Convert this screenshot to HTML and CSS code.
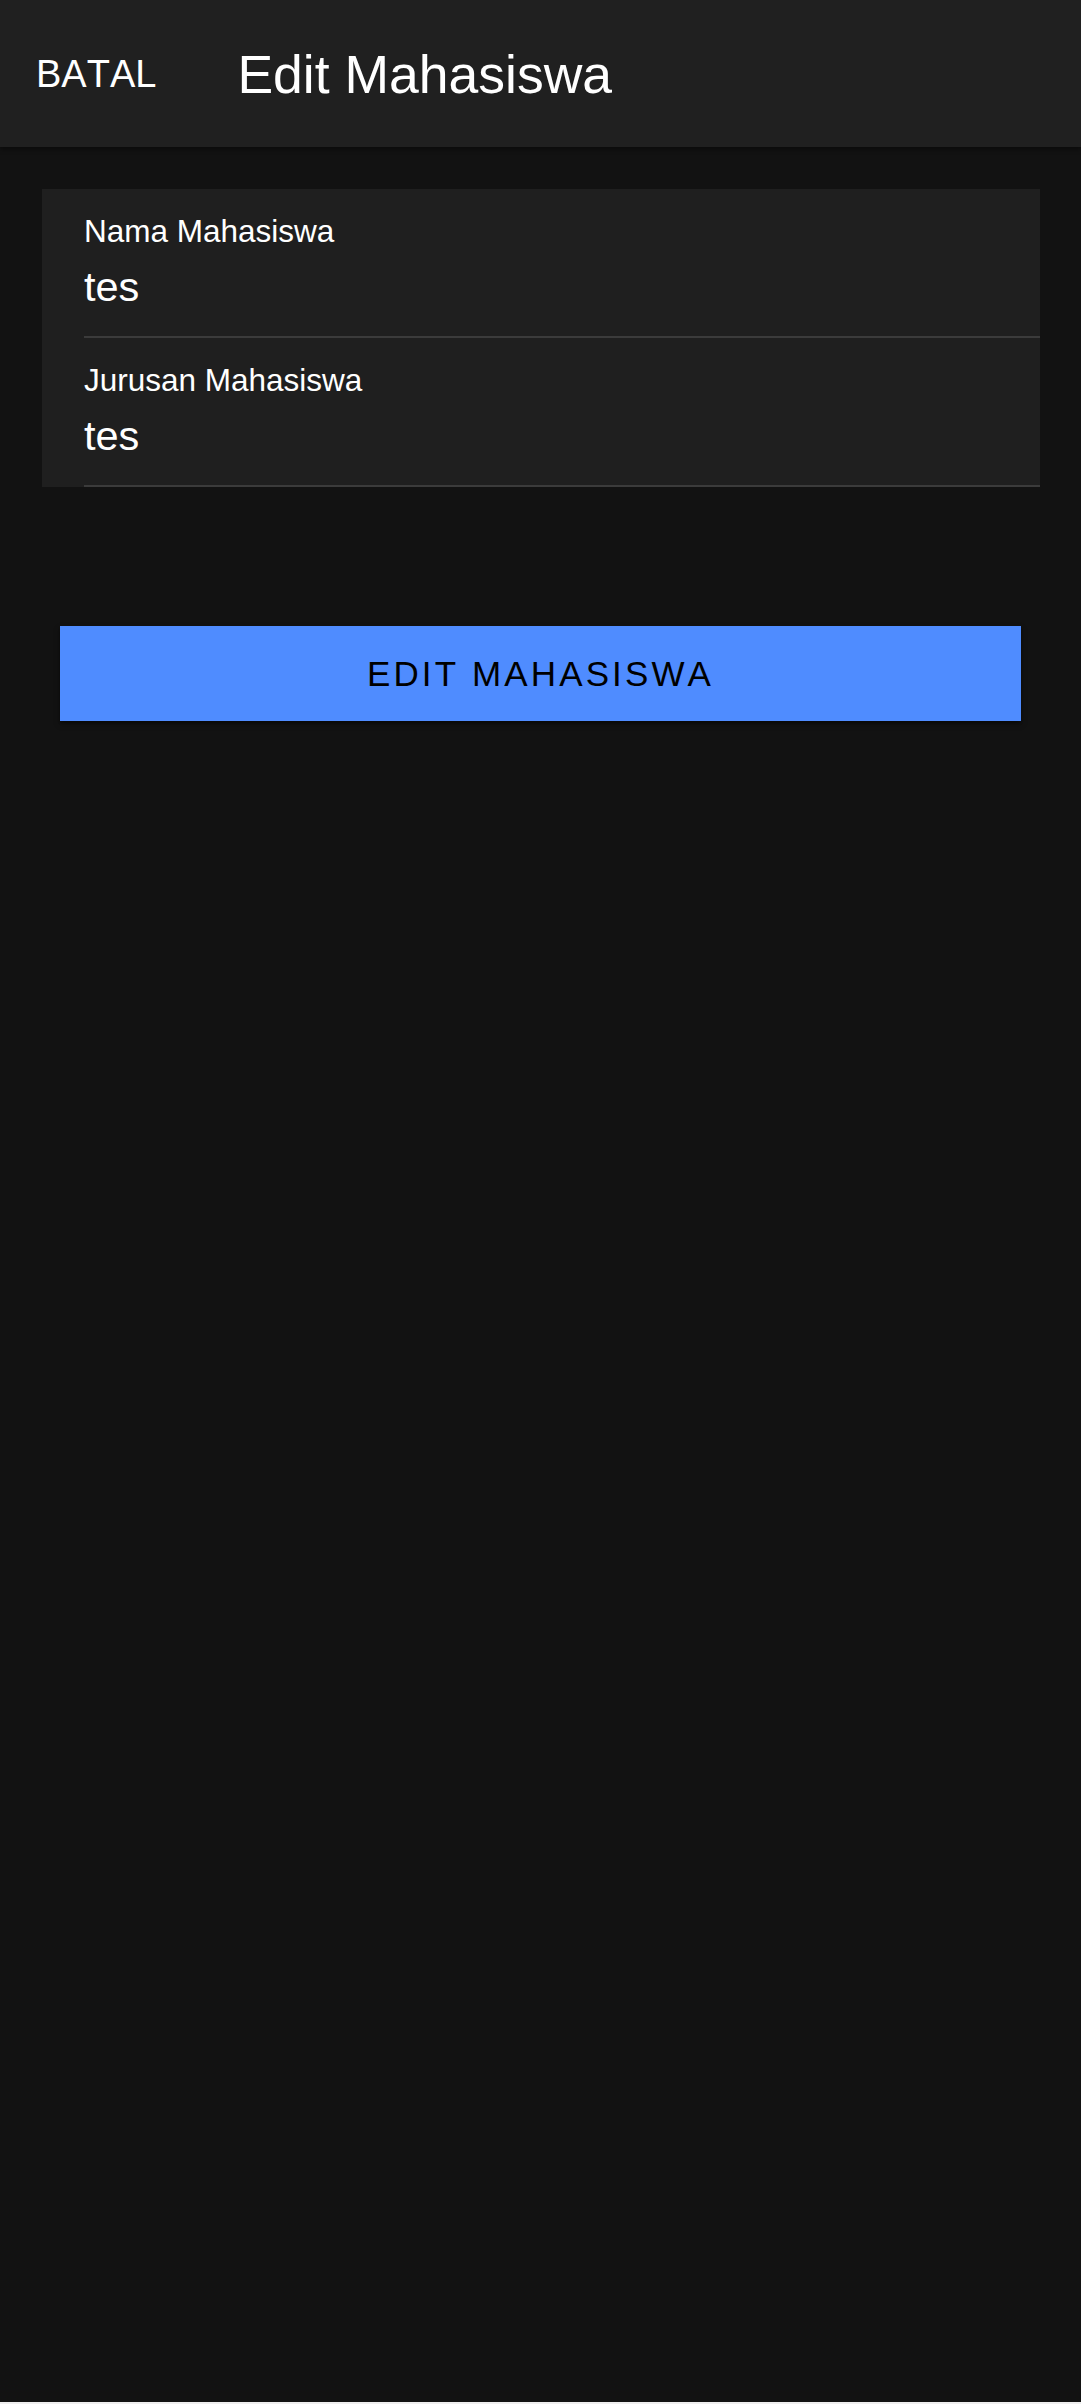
FILE: index.html
```html
<!DOCTYPE html>
<html lang="id">
<head>
<meta charset="utf-8">
<title>Edit Mahasiswa</title>
<link rel="stylesheet" href="styles.css">
</head>
<body>
<div class="app">
  <header class="appbar">
    <span class="cancel">BATAL</span>
    <h1 class="title">Edit Mahasiswa</h1>
  </header>
  <main class="content">
    <section class="card">
      <div class="field">
        <div class="label">Nama Mahasiswa</div>
        <div class="value">tes</div>
      </div>
      <div class="field">
        <div class="label">Jurusan Mahasiswa</div>
        <div class="value">tes</div>
      </div>
    </section>
    <button class="submit" type="button">EDIT MAHASISWA</button>
  </main>
</div>
</body>
</html>
```
FILE: styles.css
```css
html {
  background: #eeeeee;
}
body {
  margin: 0;
  font-family: "Liberation Sans", Arial, sans-serif;
  font-kerning: none;
  color: #ffffff;
}
.app {
  height: 2402px;
  background: #121212;
  overflow: hidden;
}
.appbar {
  height: 147px;
  background: #202020;
  display: flex;
  align-items: center;
  padding-left: 36px;
  box-shadow: 0 2px 5px rgba(0, 0, 0, 0.45);
  position: relative;
  z-index: 1;
}
.cancel {
  font-size: 38px;
  line-height: 44px;
  color: #ffffff;
  margin-right: 81px;
}
.title {
  margin: 0;
  font-size: 53.5px;
  font-weight: normal;
  line-height: 60px;
  color: #ffffff;
  position: relative;
  top: 1px;
}
.content {
  padding: 42px 41px 0 42px;
}
.card {
  background: #1f1f1f;
  display: flex;
  flex-direction: column;
}
.field {
  margin-left: 42px;
  padding: 24px 0 25px;
  border-bottom: 2px solid #3b3b3b;
}
.label {
  font-size: 31.5px;
  line-height: 36px;
}
.value {
  font-size: 41.5px;
  line-height: 48px;
  margin-top: 14px;
}
.submit {
  display: block;
  box-sizing: border-box;
  width: 961px;
  height: 95px;
  margin: 139px 0 0 18px;
  border: none;
  border-radius: 0;
  background: #4f8cff;
  color: #000000;
  font-family: "Liberation Sans", Arial, sans-serif;
  font-kerning: none;
  font-size: 35px;
  letter-spacing: 0.0893em;
  padding: 0;
  box-shadow: 0 3px 6px rgba(0, 0, 0, 0.35), 0 2px 2px rgba(0, 0, 0, 0.25);
}
```
